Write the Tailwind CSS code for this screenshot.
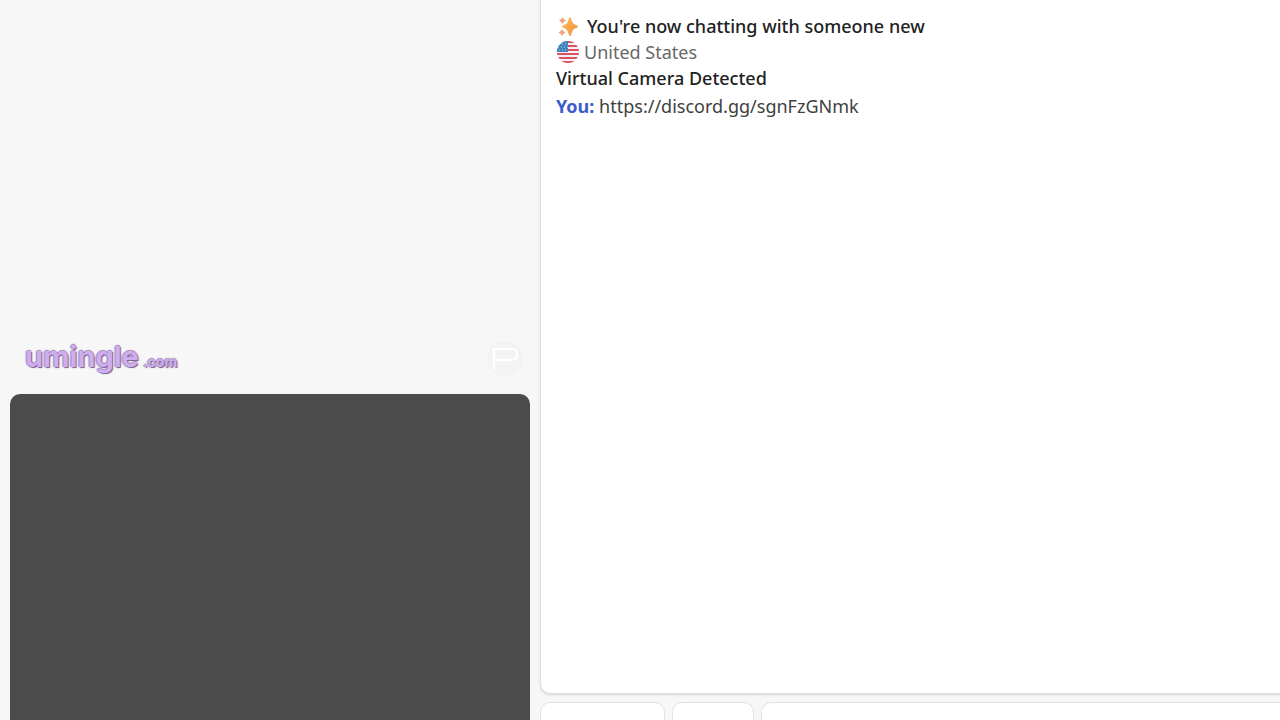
<!DOCTYPE html>
<html lang="en">
<head>
    <meta charset="UTF-8">
    <meta name="viewport" content="width=device-width, initial-scale=1.0">
    <title>umingle.com</title>
    <script src="https://cdn.jsdelivr.net/npm/@tailwindcss/browser@4"></script>
</head>
<body class="bg-[#f7f7f7] font-['Noto_Sans',sans-serif]">
    <main class="grid h-screen grid-cols-[520fr_740fr] grid-rows-1 gap-[10px] overflow-hidden pl-[10px]">
        <!-- Video column -->
        <section class="grid min-w-0 grid-rows-[394fr_326fr]">
            <div class="flex items-end justify-between pr-[7px] pb-[17px] pl-[15px]">
                <a href="#" class="flex items-baseline gap-1 font-['Inter',sans-serif] font-bold leading-10 text-[#cfaef0] [text-shadow:1px_1px_1px_#70588a,-1px_0_1px_#a58abc,0_-1px_1px_#a58abc]">
                    <span class="text-[29px]">umingle</span>
                    <span class="text-sm">.com</span>
                </a>
                <button type="button" aria-label="Report" class="flex size-9 items-center justify-center rounded-full bg-[#f3f3f3]">
                    <svg viewBox="0 0 36 36" class="size-9" fill="none" stroke="#fff" stroke-width="2" stroke-linecap="round" stroke-linejoin="round">
                        <path d="M7 28V8H25Q30 8 30 13Q30 19 25 19H7"/>
                    </svg>
                </button>
            </div>
            <div class="rounded-t-[10px] bg-[#4b4b4b]"></div>
        </section>

        <!-- Chat column, the bottom bar runs past the fold -->
        <section class="-mb-[62px] flex min-w-0 flex-col">
            <div class="min-h-0 flex-1 rounded-bl-[10px] border-b border-l border-[#dedede] bg-white px-[15px] pt-[13px] text-lg leading-[26px] shadow-sm">
                <p class="flex items-center gap-[7px] font-medium text-[#222]">
                    <svg viewBox="0 0 24 24" class="size-6">
                        <defs>
                            <linearGradient id="spark" x1="0" y1="0" x2="1" y2="1">
                                <stop offset="0" stop-color="#ffc45c"/>
                                <stop offset="1" stop-color="#f08a3c"/>
                            </linearGradient>
                        </defs>
                        <path fill="url(#spark)" d="M14 3Q15 3 15.500 5.500Q16.500 10 20 11Q22 11.500 22 12.500Q22 13.500 20 14Q16.500 15 15.500 19.500Q15 22 14 22Q13 22 12.500 19.500Q11.500 15 8 14Q6 13.500 6 12.500Q6 11.500 8 11Q11.500 10 12.500 5.500Q13 3 14 3Z"/>
                        <path fill="#f5a17c" d="M6.500 3Q7.500 6 10 6.500Q7.500 7.500 6.500 10Q5.500 7.500 3 6.500Q5.500 6 6.500 3ZM6 15Q7 18 9.500 18.500Q7 19.500 6 22Q5 19.500 2.500 18.500Q5 18 6 15Z"/>
                    </svg>
                    <span>You're now chatting with someone new</span>
                </p>
                <p class="flex items-center gap-1 text-[#686868]">
                    <svg viewBox="0 0 24 24" class="size-6">
                        <clipPath id="round"><circle cx="12" cy="12" r="11"/></clipPath>
                        <g clip-path="url(#round)">
                            <path fill="#f5f1f5" d="M0 0H24V24H0Z"/>
                            <path stroke="#dc5264" stroke-width="2" d="M0 2H24M0 6H24M0 10H24M0 14H24M0 18H24M0 22H24"/>
                            <path fill="#3f82bd" d="M0 0H12V12H0Z"/>
                            <path stroke="#b9d6ec" stroke-width="1" stroke-dasharray="1 2" d="M3 4H12M2 7H12M3 10H12"/>
                        </g>
                    </svg>
                    <span>United States</span>
                </p>
                <p class="font-medium text-[#222]">Virtual Camera Detected</p>
                <p class="pt-[2px] text-[#404040]"><strong class="font-bold text-[#3c5ccc]">You:</strong> https://discord.gg/sgnFzGNmk</p>
            </div>
            <div class="mt-2 flex h-20 shrink-0 gap-[7px]">
                <button type="button" aria-label="Skip" class="w-[125px] rounded-[10px] border border-[#e2e2e2] bg-white"></button>
                <button type="button" aria-label="Options" class="w-[82px] rounded-[10px] border border-[#e2e2e2] bg-white"></button>
                <input type="text" aria-label="Message" class="min-w-0 flex-1 rounded-l-[10px] border border-r-0 border-[#e2e2e2] bg-white px-4 text-lg">
            </div>
        </section>
    </main>
</body>
</html>
